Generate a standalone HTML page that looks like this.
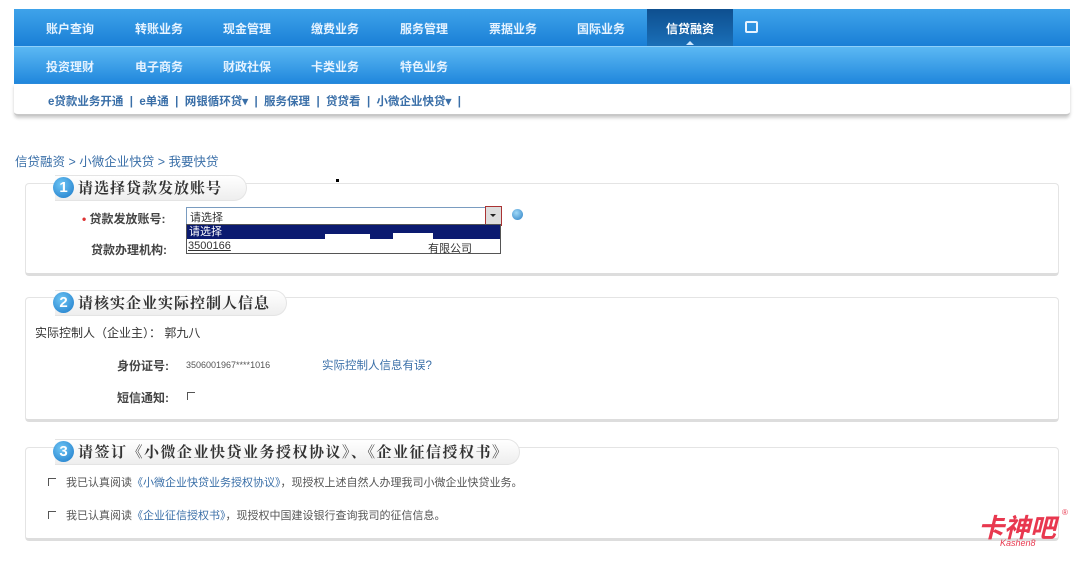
<!DOCTYPE html>
<html><head><meta charset="utf-8"><style>
*{margin:0;padding:0;box-sizing:border-box}
body{width:1080px;height:565px;background:#fff;font-family:"Liberation Sans","Noto Sans CJK SC",sans-serif;position:relative;overflow:hidden;font-size:12px;color:#333}
.a{position:absolute;white-space:nowrap}
.nav1{left:14px;top:9px;width:1056px;height:37px;background:linear-gradient(#3fa3ea,#1a7fd6)}
.nav2{left:14px;top:46px;width:1056px;height:38px;background:linear-gradient(#5bb8f3,#1f86dc);border-top:1px solid #8fd0fa}
.nt{color:#e6f3ff;font-size:12px;font-weight:bold}
.act{left:647px;top:9px;width:86px;height:37px;background:linear-gradient(#0e4f8f,#1a6fb8)}
.sub{left:14px;top:84px;width:1056px;height:32px;border-bottom:2px solid #c8c8c8;box-shadow:0 2px 3px #ccc;border-radius:0 0 4px 4px}
.sl{color:#3a6fa8;font-size:11.5px}
.box{left:25px;width:1034px;border:1px solid #e4e4e4;border-bottom:3px solid #ddd;border-radius:4px;background:#fff}
.tab{height:26px;background:linear-gradient(#fff,#eee);border-radius:0 13px 13px 0;border:1px solid #e4e4e4;border-left:none}
.num{width:21px;height:21px;border-radius:50%;background:radial-gradient(circle at 40% 35%,#6fc6f5,#1a78c8);color:#fff;font-weight:bold;font-size:15px;text-align:center;line-height:21px}
.ht{font-size:15px;font-weight:bold;color:#333;font-family:"Liberation Serif","Noto Serif CJK SC",serif;letter-spacing:1px}
.lb{font-size:12px;font-weight:bold;color:#444}
.cb{width:8px;height:8px;border-left:1px solid #555;border-top:1px solid #555}
</style></head><body>
<div class="a nav1"></div><div class="a nav2"></div><div class="a act"></div>
<div class="a" style="left:686px;top:41px;width:0;height:0;border:4px solid transparent;border-bottom-color:#cfe8ff;border-top:none"></div>
<div class="a nt" style="left:46px;top:20px">账户查询</div>
<div class="a nt" style="left:135px;top:20px">转账业务</div>
<div class="a nt" style="left:223px;top:20px">现金管理</div>
<div class="a nt" style="left:311px;top:20px">缴费业务</div>
<div class="a nt" style="left:400px;top:20px">服务管理</div>
<div class="a nt" style="left:489px;top:20px">票据业务</div>
<div class="a nt" style="left:577px;top:20px">国际业务</div>
<div class="a nt" style="left:666px;top:20px;color:#fff">信贷融资</div>
<div class="a" style="left:745px;top:21px;width:13px;height:12px;border:2px solid #e6f3ff;border-radius:2px"></div>
<div class="a nt" style="left:46px;top:58px">投资理财</div>
<div class="a nt" style="left:135px;top:58px">电子商务</div>
<div class="a nt" style="left:223px;top:58px">财政社保</div>
<div class="a nt" style="left:311px;top:58px">卡类业务</div>
<div class="a nt" style="left:400px;top:58px">特色业务</div>
<div class="a sub"></div>
<div class="a sl" style="left:48px;top:93px;font-weight:bold">e贷款业务开通 &nbsp;| &nbsp;e单通 &nbsp;| &nbsp;网银循环贷▾ &nbsp;| &nbsp;服务保理 &nbsp;| &nbsp;贷贷看 &nbsp;| &nbsp;小微企业快贷▾ &nbsp;|</div>
<div class="a sl" style="left:15px;top:151px;font-size:12.5px">信贷融资 &gt; 小微企业快贷 &gt; 我要快贷</div>
<div class="a" style="left:336px;top:179px;width:3px;height:3px;background:#000"></div>

<div class="a box" style="top:183px;height:93px"></div>
<div class="a tab" style="left:55px;top:175px;width:192px"></div>
<div class="a num" style="left:53px;top:177px">1</div>
<div class="a ht" style="left:78px;top:177px">请选择贷款发放账号</div>
<div class="a lb" style="left:82px;top:210px"><span style="color:#d33">•</span> 贷款发放账号:</div>
<div class="a" style="left:186px;top:207px;width:315px;height:18px;border:1px solid #7a9cc0;background:#fff;font-size:11px;padding:1px 3px">请选择</div>
<div class="a" style="left:485px;top:206px;width:17px;height:20px;border:1px solid #a33;background:#ddd"></div>
<div class="a" style="left:490px;top:214px;width:0;height:0;border:3px solid transparent;border-top-color:#222"></div>
<div class="a" style="left:512px;top:209px;width:11px;height:11px;border-radius:50%;background:radial-gradient(circle at 40% 35%,#9fd8f7,#2b7fc4)"></div>
<div class="a" style="left:186px;top:224px;width:315px;height:30px;border:1px solid #555;background:#fff"></div>
<div class="a" style="left:187px;top:225px;width:313px;height:14px;background:#0b1a70;color:#fff;font-size:11px;padding-left:2px;line-height:14px">请选择</div>
<div class="a" style="left:325px;top:234px;width:45px;height:10px;background:#fff"></div>
<div class="a" style="left:393px;top:233px;width:40px;height:10px;background:#fff"></div>
<div class="a" style="left:188px;top:240px;font-size:11px;color:#333;text-decoration:underline">3500166</div>
<div class="a" style="left:428px;top:240px;font-size:11px;color:#333">有限公司</div>
<div class="a lb" style="left:91px;top:241px">贷款办理机构:</div>

<div class="a box" style="top:297px;height:125px"></div>
<div class="a tab" style="left:55px;top:290px;width:232px"></div>
<div class="a num" style="left:53px;top:292px">2</div>
<div class="a ht" style="left:78px;top:292px">请核实企业实际控制人信息</div>
<div class="a lb" style="left:35px;top:324px;font-weight:normal;color:#333">实际控制人（企业主）： 郭九八</div>
<div class="a lb" style="left:117px;top:357px">身份证号:</div>
<div class="a" style="left:186px;top:360px;font-size:9px;color:#555">3506001967****1016</div>
<div class="a sl" style="left:322px;top:357px">实际控制人信息有误?</div>
<div class="a lb" style="left:117px;top:389px">短信通知:</div>
<div class="a cb" style="left:187px;top:392px"></div>

<div class="a box" style="top:447px;height:94px"></div>
<div class="a tab" style="left:55px;top:439px;width:465px"></div>
<div class="a num" style="left:53px;top:441px">3</div>
<div class="a ht" style="left:78px;top:441px;letter-spacing:1.5px">请签订《小微企业快贷业务授权协议》、《企业征信授权书》</div>
<div class="a cb" style="left:48px;top:478px"></div>
<div class="a" style="left:66px;top:474px;font-size:11px;color:#555">我已认真阅读<span style="color:#3a6fa8">《小微企业快贷业务授权协议》</span>，现授权上述自然人办理我司小微企业快贷业务。</div>
<div class="a cb" style="left:48px;top:511px"></div>
<div class="a" style="left:66px;top:507px;font-size:11px;color:#555">我已认真阅读<span style="color:#3a6fa8">《企业征信授权书》</span>，现授权中国建设银行查询我司的征信信息。</div>

<div class="a" style="left:978px;top:508px;font-size:26px;font-weight:bold;color:#e8384f;font-style:italic">卡神吧</div>
<div class="a" style="left:1000px;top:538px;font-size:9px;color:#e8384f;font-style:italic">Kashen8</div>
<div class="a" style="left:1062px;top:508px;font-size:8px;color:#e8384f">®</div>
</body></html>
